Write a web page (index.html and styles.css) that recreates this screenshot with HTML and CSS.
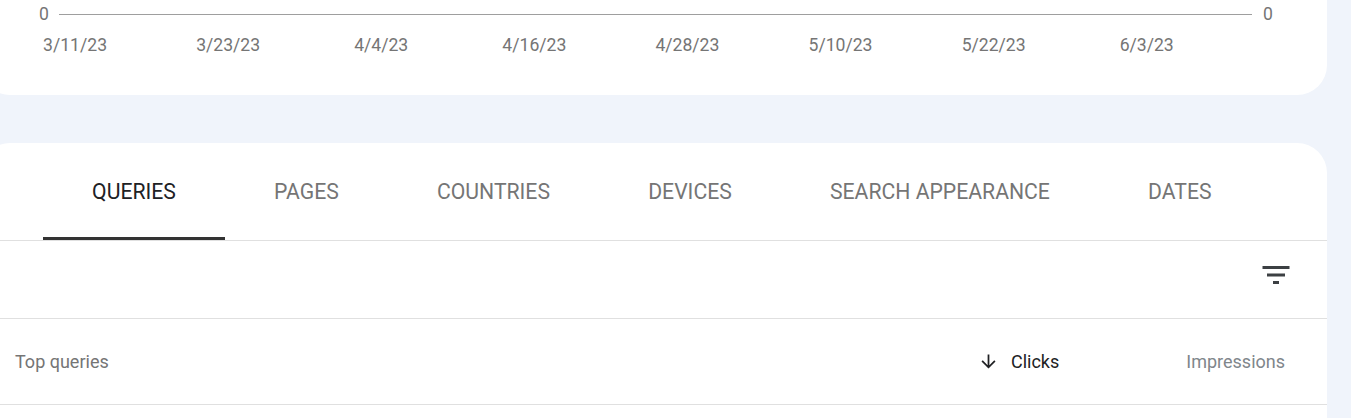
FILE: index.html
```html
<!DOCTYPE html>
<html lang="en">
<head>
<meta charset="utf-8">
<title>Performance</title>
<link rel="stylesheet" href="styles.css">
</head>
<body>
<div class="page">
  <section class="card chart-card">
    <div class="axis-row">
      <span class="axis-label">0</span>
      <span class="axis-line"></span>
      <span class="axis-label">0</span>
    </div>
    <div class="dates">
      <span>3/11/23</span>
      <span>3/23/23</span>
      <span>4/4/23</span>
      <span>4/16/23</span>
      <span>4/28/23</span>
      <span>5/10/23</span>
      <span>5/22/23</span>
      <span>6/3/23</span>
    </div>
  </section>

  <section class="card table-card">
    <nav class="tabs">
      <div class="tab active">QUERIES</div>
      <div class="tab">PAGES</div>
      <div class="tab">COUNTRIES</div>
      <div class="tab">DEVICES</div>
      <div class="tab">SEARCH APPEARANCE</div>
      <div class="tab">DATES</div>
    </nav>
    <div class="toolbar">
      <svg class="filter-icon" viewBox="0 0 24 24" width="36" height="36" aria-hidden="true">
        <path d="M10 18h4v-2h-4v2zM3 6v2h18V6H3zm3 7h12v-2H6v2z"/>
      </svg>
    </div>
    <div class="header-row">
      <div class="col-query">Top queries</div>
      <div class="col-clicks">
        <svg class="sort-icon" viewBox="0 0 24 24" width="21" height="21" aria-hidden="true">
          <path d="M20 12l-1.41-1.41L13 16.17V4h-2v12.17l-5.58-5.59L4 12l8 8 8-8z"/>
        </svg>
        <span>Clicks</span>
      </div>
      <div class="col-impr">Impressions</div>
    </div>
    <div class="rest"></div>
  </section>
</div>
</body>
</html>
```

FILE: styles.css
```css
* { box-sizing: border-box; }

html, body {
  margin: 0;
  padding: 0;
  background: #f0f4fb;
  font-family: Roboto, "Liberation Sans", Arial, sans-serif;
  overflow: hidden;
}

.page {
  margin-left: -20px;
  width: 1347px;
  display: flex;
  flex-direction: column;
  gap: 48px;
}

.card {
  background: #ffffff;
  border-radius: 30px;
}

/* chart card */
.chart-card {
  margin-top: -30px;
  padding: 30px 54px 39px 59px;
}

.axis-row {
  display: flex;
  align-items: center;
  height: 28px;
}

.axis-label {
  font-size: 17.6px;
  color: #757575;
  line-height: 20px;
}

.axis-line {
  flex: 1;
  height: 1px;
  background: #9e9e9e;
  margin: 0 11px 0 10px;
}

.dates {
  display: grid;
  grid-template-columns: repeat(8, 153.1px);
  margin-left: -40.5px;
  margin-top: 7px;
  font-size: 17.6px;
  line-height: 21px;
  color: #757575;
  text-align: center;
}

/* table card */
.table-card {
  height: 320px;
}

.tabs {
  display: flex;
  padding-left: 63px;
  height: 98px;
  border-bottom: 1px solid #e0e0e0;
}

.tab {
  padding: 0 49.1px;
  display: flex;
  align-items: center;
  font-size: 21.2px;
  font-weight: 400;
  color: #757575;
  border-bottom: 3px solid transparent;
  padding-top: 3px;
}

.tab.active {
  color: #202124;
  border-bottom-color: #333333;
}

.toolbar {
  display: flex;
  justify-content: flex-end;
  padding: 16px 33px 0 0;
  height: 78px;
  border-bottom: 1px solid #e0e0e0;
}

.filter-icon {
  fill: #3c4043;
  display: block;
}

.header-row {
  display: flex;
  align-items: center;
  height: 86px;
  padding: 0 42px 0 35px;
  font-size: 18px;
  border-bottom: 1px solid #e0e0e0;
}

.col-query {
  flex: 1;
  color: #757575;
}

.col-clicks {
  display: flex;
  align-items: center;
  color: #202124;
}

.sort-icon {
  fill: #202124;
  display: block;
  margin-right: 11.5px;
}

.col-impr {
  margin-left: 127px;
  color: #80868b;
}
```
